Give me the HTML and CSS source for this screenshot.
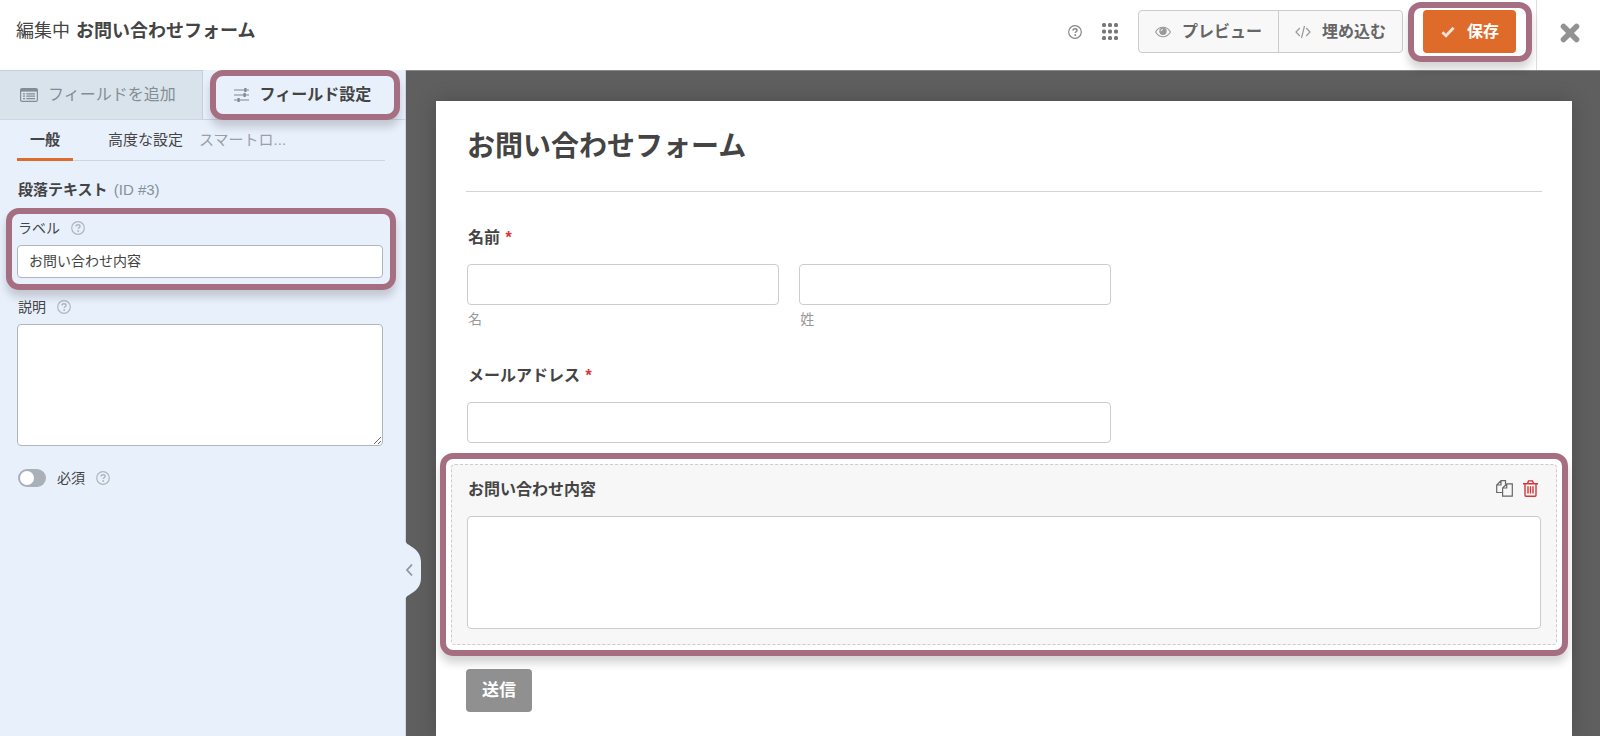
FILE: index.html
```html
<!DOCTYPE html>
<html lang="ja">
<head>
<meta charset="utf-8">
<meta name="viewport" content="width=device-width, initial-scale=1">
<title>お問い合わせフォーム</title>
<link rel="stylesheet" href="styles.css">
</head>
<body>
<svg class="sprite" aria-hidden="true">
  <symbol id="help" viewBox="0 0 14 14">
    <circle cx="7" cy="7" r="6.3" fill="none" stroke="currentColor" stroke-width="1.2"/>
    <path d="M5 5.600C5 4.300 5.900 3.700 7 3.700s2 .7 2 1.700c0 1.300-1.800 1.400-1.800 2.700" fill="none" stroke="currentColor" stroke-width="1.500"/>
    <circle cx="7.200" cy="10" r=".95" fill="currentColor"/>
  </symbol>
</svg>
<header class="topbar">
  <h1 class="topbar-title">編集中 <strong>お問い合わせフォーム</strong></h1>
  <div class="topbar-actions">
    <button class="icon-button" aria-label="ヘルプ"><svg class="icon-help"><use href="#help"/></svg></button>
    <button class="icon-button" aria-label="メニュー">
      <svg width="16" height="17" viewBox="0 0 16 17" fill="#777"><rect x="0" y="0" width="4" height="4" rx="1.500"/><rect x="6" y="0" width="4" height="4" rx="1.500"/><rect x="12" y="0" width="4" height="4" rx="1.500"/><rect x="0" y="6.500" width="4" height="4" rx="1.500"/><rect x="6" y="6.500" width="4" height="4" rx="1.500"/><rect x="12" y="6.500" width="4" height="4" rx="1.500"/><rect x="0" y="13" width="4" height="4" rx="1.500"/><rect x="6" y="13" width="4" height="4" rx="1.500"/><rect x="12" y="13" width="4" height="4" rx="1.500"/></svg>
    </button>
    <div class="button-group">
      <button class="tool-button">
        <svg width="16" height="12" viewBox="0 0 16 12"><path d="M.6 6C2.300 3 5 1.300 8 1.300S13.700 3 15.400 6C13.700 9 11 10.700 8 10.700S2.300 9 .6 6z" fill="none" stroke="#999" stroke-width="1.100"/><circle cx="8" cy="5.300" r="3.700" fill="#999"/><path d="M6 5.200A2.100 2.100 0 0 1 8 3.200" fill="none" stroke="#f8f8f8" stroke-width=".9"/></svg>プレビュー
      </button>
      <button class="tool-button">
        <svg width="16" height="14" viewBox="0 0 16 14" fill="none" stroke="#999" stroke-width="1.200"><path d="M4.800 3L1 7l3.800 4M11.200 3L15 7l-3.800 4M9.500 1l-3 12"/></svg>埋め込む
      </button>
    </div>
    <div class="save-wrap highlight">
      <button class="save-button">
        <svg width="14" height="12" viewBox="0 0 14 12"><path d="M1.400 6.200L5 9.800 12.600 1.800" fill="none" stroke="#fbe3d5" stroke-width="2.800"/></svg>保存
      </button>
    </div>
    <button class="close-button" aria-label="閉じる">
      <svg width="20" height="20" viewBox="0 0 20 20"><path d="M3.500 3.500l13 13M16.500 3.500l-13 13" stroke="#929292" stroke-width="5.600" stroke-linecap="round"/></svg>
    </button>
  </div>
</header>
<div class="builder">
  <aside class="sidebar">
    <div class="tabs">
      <button class="tab tab-add">
        <svg width="18" height="14" viewBox="0 0 18 14"><rect x=".6" y=".6" width="16.800" height="12.800" rx="1.500" fill="none" stroke="#858d94" stroke-width="1.200"/><path d="M.6 1h16.800v2.600H.6z" fill="#858d94"/><path d="M3 5.800h2M3 8.200h2M3 10.600h2M6.300 5.800h8.700M6.300 8.200h8.700M6.300 10.600h8.700" stroke="#858d94" stroke-width="1.200"/></svg>フィールドを追加
      </button>
      <button class="tab tab-options highlight">
        <svg width="16" height="14" viewBox="0 0 16 14" stroke="#7f868d"><path d="M0 2h15M0 7h15M0 12h15" stroke-width="1.100"/><path d="M11 0v4M11.800 0v4M10.200 5v4M11 5v4M4.200 10v4M5 10v4" stroke-width="1.400"/></svg>フィールド設定
      </button>
    </div>
    <nav class="subtabs">
      <a class="subtab subtab-active" href="#general">一般</a>
      <a class="subtab" href="#advanced">高度な設定</a>
      <a class="subtab subtab-muted" href="#logic">スマートロ...</a>
    </nav>
    <form class="options" id="general">
      <h2 class="options-title">段落テキスト <span class="options-id">(ID #3)</span></h2>
      <div class="option highlight option-label">
        <div class="option-head"><label for="field-label">ラベル</label><svg class="icon-hint"><use href="#help"/></svg></div>
        <input class="option-input" id="field-label" type="text" value="お問い合わせ内容">
      </div>
      <div class="option">
        <div class="option-head"><label for="field-desc">説明</label><svg class="icon-hint"><use href="#help"/></svg></div>
        <textarea class="option-input option-textarea" id="field-desc"></textarea>
      </div>
      <div class="option-toggle">
        <input class="switch" type="checkbox" id="field-required"><label for="field-required">必須</label><svg class="icon-hint"><use href="#help"/></svg>
      </div>
    </form>
    <button class="collapse" aria-label="サイドバーを閉じる">
      <svg width="18" height="56" viewBox="0 0 18 56"><path d="M0 0h1C2 4 16 6 16 20v16C16 50 2 52 1 56H0z" fill="#e8f0fc"/><path d="M7 22.500L2 28l5 5.500" fill="none" stroke="#8e959c" stroke-width="1.800"/></svg>
    </button>
  </aside>
  <main class="canvas">
    <form class="preview">
      <h2 class="preview-title">お問い合わせフォーム</h2>
      <div class="fields">
        <div class="field" role="group" aria-labelledby="name-label">
          <div class="field-label" id="name-label">名前 <span class="required">*</span></div>
          <div class="name-row">
            <div class="name-cell"><input class="field-input" id="first" type="text"><label class="sublabel" for="first">名</label></div>
            <div class="name-cell"><input class="field-input" id="last" type="text"><label class="sublabel" for="last">姓</label></div>
          </div>
        </div>
        <div class="field">
          <label class="field-label" for="email">メールアドレス <span class="required">*</span></label>
          <input class="field-input field-medium" id="email" type="email">
        </div>
        <div class="field field-selected highlight">
          <div class="field-head">
            <label class="field-label" for="message">お問い合わせ内容</label>
            <div class="field-tools">
              <button type="button" class="icon-button" aria-label="複製"><svg width="17" height="17" viewBox="0 0 17 17" fill="none" stroke="#666" stroke-width="1.200"><path d="M6.500 12.500H.7V5L5 .7h4.500v3.500M5 .7V5H.7"/><path d="M10.700 3.900h5.600v12.300H6.600V8zM10.700 3.900V8H6.600"/></svg></button>
              <button type="button" class="icon-button" aria-label="削除"><svg width="15" height="17" viewBox="0 0 15 17" fill="none" stroke="#d63638" stroke-width="1.400"><path d="M0 3.700h15M4.500 3.500l1-2.600h4l1 2.600M2 3.700v11.600q0 .9.900.9h9.200q.9 0 .9-.9V3.700M5 6.300v7.200M7.500 6.300v7.200M10 6.300v7.200"/></svg></button>
            </div>
          </div>
          <textarea class="field-input field-textarea" id="message"></textarea>
        </div>
      </div>
      <button type="button" class="submit">送信</button>
    </form>
  </main>
</div>
</body>
</html>
```

FILE: styles.css
```css
* {
  box-sizing: border-box;
}

body {
  margin: 0;
  display: flex;
  flex-direction: column;
  min-height: 100vh;
  font-family: "Liberation Sans", "Noto Sans CJK JP", sans-serif;
  font-size: 16px;
  line-height: 20px;
  color: #444;
  background: #5f5f5f;
}

button,
input,
textarea {
  font: inherit;
  color: inherit;
  margin: 0;
}

button {
  border: 0;
  padding: 0;
  background: none;
  cursor: pointer;
}

svg {
  display: block;
  flex: none;
}

h1,
h2 {
  margin: 0;
}

.sprite {
  display: none;
}

/* Callout ring around the parts that the guide points at */
.highlight {
  position: relative;
}

.highlight::after {
  content: "";
  position: absolute;
  z-index: 2;
  inset: -12px;
  border: 6px solid #a66f81;
  border-radius: 13px;
  box-shadow: 0 7px 8px rgba(0, 0, 0, 0.17);
  pointer-events: none;
}

/* Top bar */
.topbar {
  display: flex;
  justify-content: space-between;
  height: 70px;
  background: #fff;
}

.topbar-title {
  padding: 19px 16px;
  font-size: 18px;
  line-height: 24px;
  font-weight: 400;
}

.topbar-title strong {
  margin-left: 1px;
}

.topbar-actions {
  display: flex;
  align-items: flex-start;
  padding-top: 10px;
}

.topbar-actions > .icon-button {
  display: flex;
  align-items: center;
  height: 43px;
  margin-right: 20px;
  color: #888;
}

.icon-help {
  width: 14px;
  height: 14px;
}

.button-group {
  display: flex;
  height: 43px;
  border: 1px solid #ccc;
  border-radius: 4px;
  background: #f8f8f8;
}

.tool-button {
  display: flex;
  align-items: center;
  gap: 11px;
  padding: 0 16px;
  font-weight: 700;
  color: #666;
}

.tool-button + .tool-button {
  border-left: 1px solid #ccc;
}

.save-wrap {
  margin-left: 20px;
}

.save-wrap::after {
  inset: -8px -16px -9px -15px;
}

.save-button {
  display: flex;
  align-items: center;
  gap: 12px;
  height: 43px;
  padding: 0 17px 0 18px;
  border-radius: 4px;
  background: #df6b2b;
  color: #fff;
  font-weight: 700;
}

.close-button {
  display: flex;
  align-items: center;
  justify-content: center;
  align-self: stretch;
  width: 64px;
  margin: -10px 0 0 20px;
  padding: 0 0 4px 2px;
  border-left: 1px solid #ddd;
}

/* Sidebar */
.builder {
  display: flex;
  flex: 1;
}

.sidebar {
  position: relative;
  z-index: 1;
  flex: none;
  width: 406px;
  background: #e8f0fc;
  border-right: 1px solid #ced7e0;
}

.tabs {
  display: grid;
  grid-template-columns: 1fr 1fr;
  height: 50px;
}

.tab {
  display: flex;
  align-items: center;
  gap: 10px;
  border-bottom: 1px solid #ced7e0;
}

.tab-add {
  padding-left: 20px;
  background: #d9e3ec;
  border-right: 1px solid #c5d0d9;
  border-top: 1px solid #c5d0d9;
  color: #858d94;
}

.tab-options {
  padding-left: 31px;
  font-weight: 700;
}

.tab-options::after {
  inset: 0 5px -1px 7px;
}

.subtabs {
  display: flex;
  height: 41px;
  margin: 0 20px 0 17px;
  border-bottom: 1px solid #ced7e0;
}

.subtab {
  margin-right: 16px;
  padding-top: 10px;
  font-size: 15px;
  color: #444;
  text-decoration: none;
}

.subtab-active {
  margin: 0 35px -1px 0;
  padding: 10px 13px 0;
  border-bottom: 3px solid #df6b2b;
  font-weight: 700;
}

.subtab-muted {
  color: #9a9fa8;
}

.options {
  display: flex;
  flex-direction: column;
  gap: 18px;
  padding: 19px 22px 0 17px;
  font-size: 14px;
}

.options-title {
  padding-left: 1px;
  font-size: 15px;
}

.options-id {
  margin-left: 2px;
  font-weight: 400;
  color: #86909a;
}

.option {
  display: flex;
  flex-direction: column;
  gap: 7px;
}

.option-label {
  margin-bottom: 1px;
}

.option-label::after {
  inset: -10px -13px -12px -11px;
}

.option-head,
.option-toggle {
  display: flex;
  align-items: center;
  gap: 11px;
  padding-left: 1px;
}

.icon-hint {
  width: 14px;
  height: 14px;
  color: #b0b6bd;
}

.option-input {
  width: 100%;
  height: 33px;
  padding: 0 11px 3px;
  border: 1px solid #b0b6bd;
  border-radius: 4px;
  background: #fff;
  outline: 0;
}

.option-textarea {
  display: block;
  height: 122px;
}

.option-toggle {
  padding-top: 4px;
}

.switch {
  appearance: none;
  display: flex;
  align-items: center;
  width: 28px;
  height: 18px;
  padding: 2px;
  border-radius: 9px;
  background: #a9b0b8;
}

.switch::before {
  content: "";
  width: 14px;
  height: 14px;
  border-radius: 50%;
  background: #fff;
}

.switch:checked {
  justify-content: flex-end;
}

/* Handle that hangs over the canvas at the sidebar's edge */
.collapse {
  position: absolute;
  left: 100%;
  bottom: 138px;
}

/* Form preview */
.canvas {
  flex: 1;
  display: flex;
  padding: 30px 28px 0 30px;
  border-top: 1px solid #888;
}

.preview {
  flex: 1;
  padding: 0 15px 20px;
  background: #fff;
  box-shadow: 0 0 20px rgba(0, 0, 0, 0.2);
}

.preview-title {
  margin: 0 15px 20px;
  padding: 30px 1px 28px;
  border-bottom: 1px solid #d3d3d3;
  font-size: 28px;
  line-height: 32px;
}

.fields {
  display: flex;
  flex-direction: column;
  gap: 5px;
}

.field {
  padding: 15px;
  border: 1px dashed transparent;
  border-radius: 4px;
}

.field-label {
  display: block;
  padding: 0 1px;
  font-weight: 700;
}

.required {
  margin-left: 1px;
  color: #d63638;
}

.field-input {
  display: block;
  width: 100%;
  height: 41px;
  margin-top: 16px;
  padding: 0 10px;
  border: 1px solid #ccc;
  border-radius: 4px;
  background: #fff;
  outline: 0;
}

.field-medium {
  width: 60%;
}

.name-row {
  display: grid;
  grid-template-columns: 1fr 1fr;
  gap: 20px;
  width: 60%;
}

.sublabel {
  display: block;
  margin-top: 4px;
  padding-left: 1px;
  font-size: 14px;
  color: #999;
}

.field-selected {
  border-color: #ccc;
  background: #f7f7f7;
}

.field-head {
  display: flex;
  justify-content: space-between;
}

.field-tools {
  display: flex;
  gap: 10px;
  height: 17px;
  padding-right: 3px;
}

.field-textarea {
  height: 113px;
  resize: none;
}

.submit {
  display: block;
  height: 43px;
  margin: 24px 0 0 15px;
  padding: 0 16px;
  border-radius: 4px;
  background: #909090;
  color: #fff;
  font-size: 17px;
  font-weight: 700;
}
```
